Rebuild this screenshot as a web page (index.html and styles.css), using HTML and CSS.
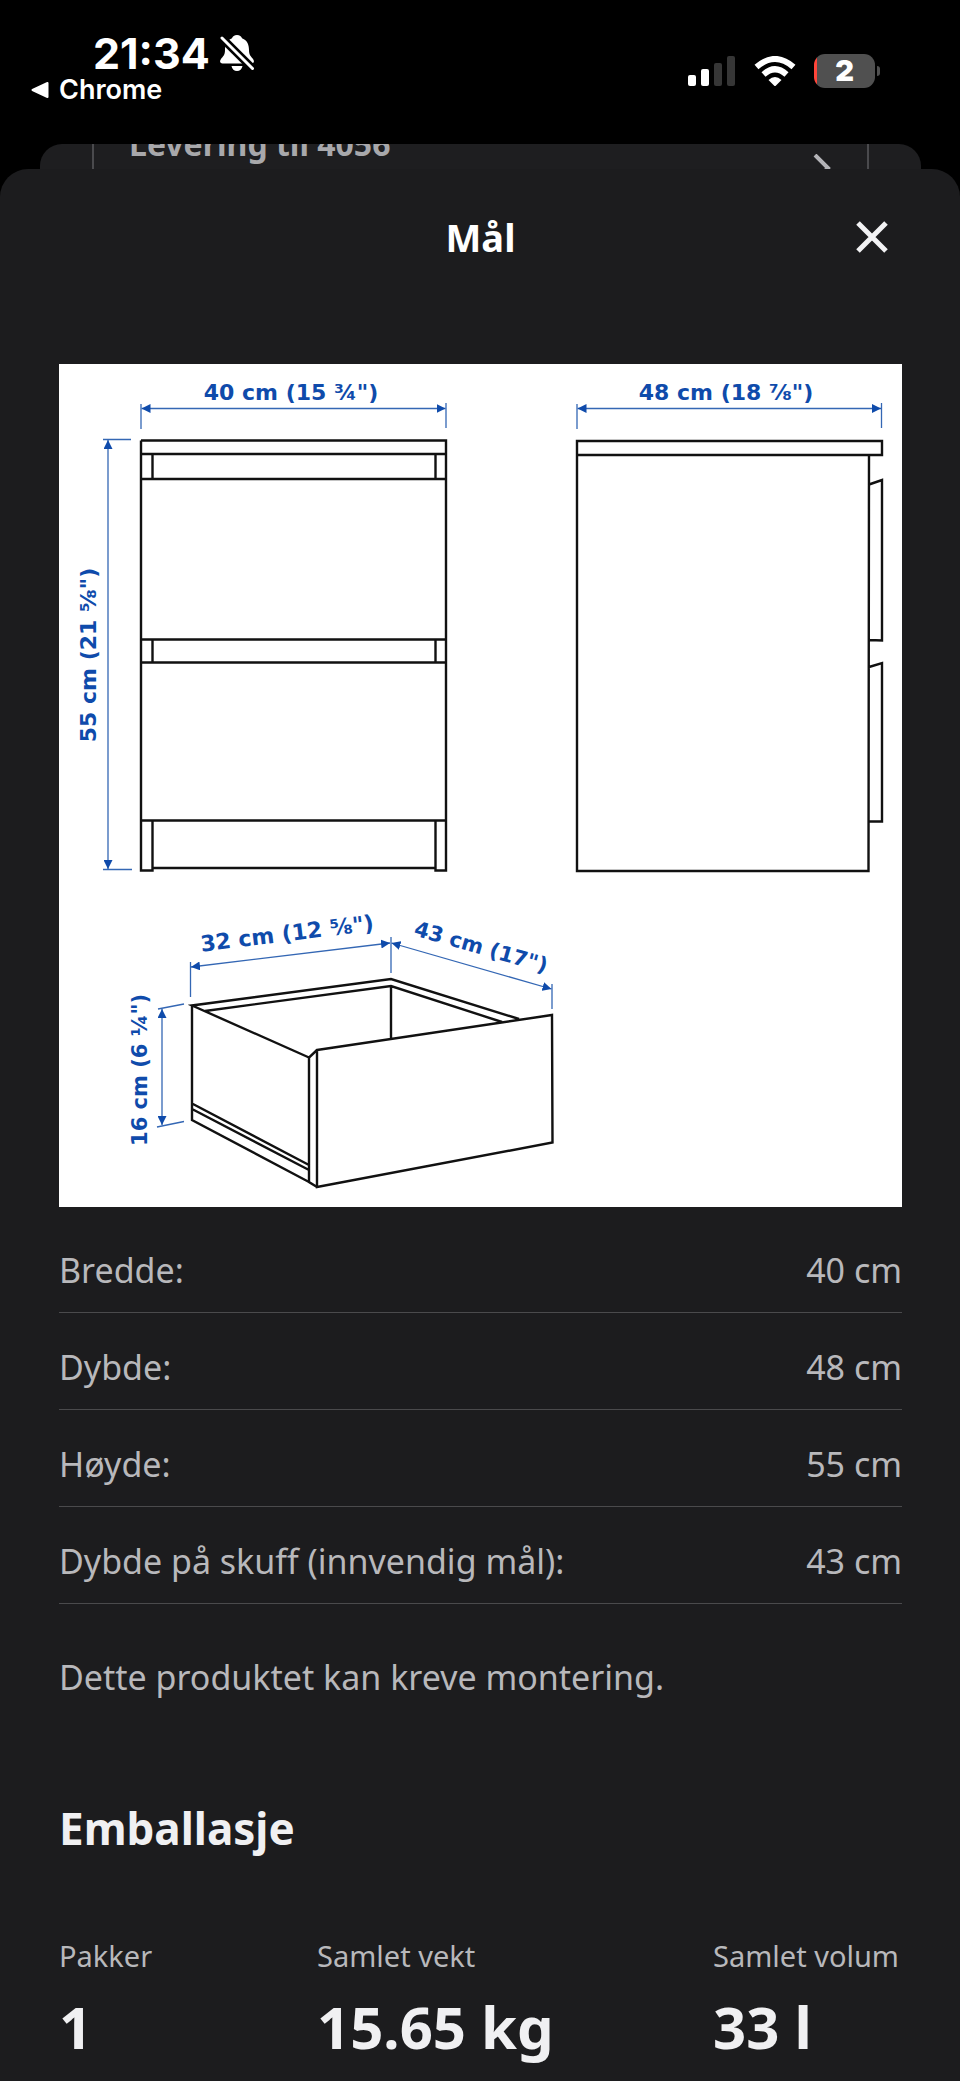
FILE: index.html
```html
<!DOCTYPE html>
<html lang="nb">
<head>
<meta charset="utf-8">
<meta name="viewport" content="width=device-width, initial-scale=1">
<title>Mål</title>
<link rel="stylesheet" href="styles.css">
</head>
<body>
<header class="status">
  <div class="status-left">
    <div class="clock">
      <time>21:34</time>
      <svg class="bell" width="34" height="36" viewBox="0 0 34 36" aria-hidden="true">
        <path fill="#fff" d="M17 0c-2.600 0-4.500 1.300-5 3.200C6.500 5.200 5 10 5 15c0 5-2 6.500-4 9-1.800 2.200-.8 4.500 1.500 4.500h29c2.300 0 3.300-2.300 1.500-4.500-2-2.500-4-4-4-9 0-5-1.500-9.800-7-11.800C21.500 1.300 19.600 0 17 0zM11.500 31h11c-.5 3-2.700 5-5.500 5s-5-2-5.500-5z"/>
        <path stroke="#000" stroke-width="8" d="M0 1l34 34"/>
        <path stroke="#fff" stroke-width="3" stroke-linecap="round" d="M2 3l30.500 30.500"/>
      </svg>
    </div>
    <a class="back" href="#">
      <svg width="18" height="18" viewBox="0 0 18 18" aria-hidden="true"><path fill="#fff" stroke="#fff" stroke-width="2" stroke-linejoin="round" d="M1.500 9L16.500 2v14z"/></svg>
      Chrome
    </a>
  </div>
  <div class="status-right">
    <svg width="48" height="30" viewBox="0 0 48 30" aria-hidden="true">
      <g fill="#fff"><rect y="19" width="8" height="11" rx="2"/><rect x="13" y="13" width="8" height="17" rx="2"/></g>
      <g fill="#363636"><rect x="26" y="7" width="8" height="23" rx="2"/><rect x="39" width="8" height="30" rx="2"/></g>
    </svg>
    <svg width="42" height="30" viewBox="0 0 42 30" aria-hidden="true">
      <g fill="none" stroke="#fff" stroke-width="6"><path d="M2.500 11Q21-5 39.500 11"/><path d="M9.500 18.500Q21 8 32.500 18.500"/></g>
      <path fill="#fff" d="M14.500 24Q21 18 27.500 24L21 30.500z"/>
    </svg>
    <div class="battery">2</div>
  </div>
</header>

<div class="backdrop">
  <div class="delivery">
    <span class="delivery-text">Levering til 4056</span>
    <svg width="18" height="28" viewBox="0 0 18 28" aria-hidden="true"><path fill="none" stroke="#b4b4b8" stroke-width="4" d="M2 1l13 13L2 27"/></svg>
  </div>
</div>

<main class="sheet">
  <div class="sheet-head">
    <h1>Mål</h1>
    <button class="close" type="button" aria-label="Lukk">
      <svg width="32" height="32" viewBox="0 0 32 32" aria-hidden="true"><path stroke="#f2f2f4" stroke-width="5" d="M2 2l28 28M30 2L2 30"/></svg>
    </button>
  </div>

  <svg class="drawing" viewBox="59 364 843 843" role="img" aria-label="Måltegning">
    <defs>
      <marker id="arrow" viewBox="0 0 8 8" refX="8" refY="4" markerWidth="9" markerHeight="9" markerUnits="userSpaceOnUse" orient="auto-start-reverse"><path class="tip" d="M0 0l8 4-8 4z"/></marker>
    </defs>
    <g class="outline">
      <!-- front -->
      <path d="M141 440.500H446V870.500H435.500V820.500M141 440.500V870.500H152.500V820.500M141 454H446M141 479H446M152.500 454V479M435.500 454V479M141 639.500H446M141 662.500H446M152.500 639.500V663M435.500 639.500V662.500M141 820.500H446M152.500 868H435.500"/>
      <!-- side -->
      <path d="M577 441H882V455H577zM577 455V871H868.500L869 455M869 484.500L882 480V640.500L869 640M869 667L882 663V821.500H869"/>
      <!-- drawer -->
      <path d="M309 1057.500L192 1005.500L391 979L519 1019M205 1011L391 986L502 1022M391 986V1038M317 1050L552 1015L552.500 1142.500L317 1187zM317 1050L309 1057.500V1182L317 1187M192 1005.500V1120L309 1182M192 1103.500L309 1165M192 1109L309 1170"/>
    </g>
    <g class="ticks">
      <path d="M141 404V429M446 403V428M103 439.500H131M103 869.500H132M577 404V429M881.500 403V428M190.500 962V997M391 937V973M552 984V1009M158 1009L184 1004M157 1127L184 1121.500"/>
      <g marker-start="url(#arrow)" marker-end="url(#arrow)">
        <path d="M141.500 408.500H445.500"/><path d="M577.500 408.500H881"/><path d="M108 440V869"/>
        <path d="M191 967L390 943"/><path d="M391.500 943L551.500 989"/><path d="M162 1009V1125"/>
      </g>
    </g>
    <g class="dims" text-anchor="middle">
      <text x="291" y="400">40 cm (15 ¾")</text>
      <text x="726" y="400">48 cm (18 ⅞")</text>
      <text transform="translate(96 655) rotate(-90)">55 cm (21 ⅝")</text>
      <text transform="translate(288 941) rotate(-7)">32 cm (12 ⅝")</text>
      <text class="dim-small" transform="translate(479 954) rotate(16)">43 cm (17")</text>
      <text class="dim-small" transform="translate(147 1070) rotate(-90)">16 cm (6 ¼")</text>
    </g>
  </svg>

  <table class="specs">
    <tbody>
      <tr><th scope="row">Bredde:</th><td>40 cm</td></tr>
      <tr><th scope="row">Dybde:</th><td>48 cm</td></tr>
      <tr><th scope="row">Høyde:</th><td>55 cm</td></tr>
      <tr><th scope="row">Dybde på skuff (innvendig mål):</th><td>43 cm</td></tr>
    </tbody>
  </table>

  <p class="note">Dette produktet kan kreve montering.</p>

  <h2>Emballasje</h2>
  <dl class="package">
    <div><dt>Pakker</dt><dd>1</dd></div>
    <div><dt>Samlet vekt</dt><dd>15.65 kg</dd></div>
    <div><dt>Samlet volum</dt><dd>33 l</dd></div>
  </dl>
</main>
</body>
</html>
```

FILE: styles.css
```css
* { box-sizing: border-box; }
body {
  margin: 0;
  background: #000;
  color: #b8b8bb;
  font-family: "Noto Sans", sans-serif;
}
h1, h2, p, dl, dd { margin: 0; }
svg { display: block; flex: none; }

.status {
  display: flex;
  justify-content: space-between;
  height: 144px;
  padding: 28px 85px 0 31px;
  color: #fff;
  font-family: Inter, sans-serif;
}
.clock {
  display: flex;
  align-items: center;
  gap: 10px;
  padding-left: 62px;
  font-size: 43px;
  font-weight: 700;
  line-height: 50px;
}
.back {
  display: flex;
  align-items: center;
  gap: 10px;
  color: #fff;
  font-size: 27px;
  font-weight: 600;
  line-height: 24px;
  text-decoration: none;
}
.status-right {
  display: flex;
  align-items: center;
  gap: 18px;
  height: 86px;
}
.battery {
  position: relative;
  width: 61px;
  height: 34px;
  border-radius: 11px;
  background: linear-gradient(to right, #ff453a 3px, #505050 3px);
  font-size: 29px;
  font-weight: 900;
  line-height: 34px;
  text-align: center;
}
.battery::after {
  content: "";
  position: absolute;
  right: -5px;
  top: 12px;
  width: 3px;
  height: 10px;
  border-radius: 0 4px 4px 0;
  background: #505050;
}

.backdrop {
  height: 54px;
  margin: 0 39px 0 40px;
  padding: 0 52px;
  overflow: hidden;
  border-radius: 22px 22px 0 0;
  background: #1e1e20;
}
.delivery {
  display: flex;
  justify-content: space-between;
  height: 54px;
  padding: 0 36px 0 35px;
  border: solid #4a4a4d;
  border-width: 0 2px;
}
.delivery-text {
  margin-top: -20px;
  color: #a8a8ab;
  font-size: 32px;
  font-weight: 700;
  line-height: 40px;
}
.delivery svg { margin-top: 10px; }

.sheet {
  position: relative;
  margin-top: -29px;
  padding: 0 58px 15px 59px;
  border-radius: 28px 28px 0 0;
  background: #1c1c1e;
}
.sheet-head {
  display: grid;
  grid-template-columns: 1fr auto 1fr;
  align-items: center;
  height: 195px;
  padding: 0 14px 59px;
}
.sheet-head h1 {
  grid-column: 2;
  color: #fff;
  font-size: 38px;
  line-height: 52px;
}
.close {
  justify-self: end;
  padding: 0;
  border: 0;
  background: none;
}

.drawing {
  width: 100%;
  height: auto;
  background: #fff;
}
.outline { fill: none; stroke: #111; stroke-width: 2.4; }
.ticks { fill: none; stroke: #3467b4; stroke-width: 1.3; }
.tip { fill: #0f4bab; stroke: none; }
.dims { fill: #0f4bab; font: 700 22px "DejaVu Sans", sans-serif; }
.dim-small { font-size: 21px; }

.specs {
  width: 100%;
  margin-top: 9px;
  border-collapse: separate;
  border-spacing: 0;
  font-size: 34px;
  line-height: 48px;
}
.specs th, .specs td {
  padding: 30px 0 18px;
  border-bottom: 1px solid #4a4a4c;
  font-weight: 400;
  text-align: left;
}
.specs td { text-align: right; }

.note {
  margin-top: 49px;
  font-size: 34px;
  line-height: 48px;
}
h2 {
  margin-top: 97px;
  color: #f0f0f2;
  font-size: 44px;
  line-height: 60px;
}
.package {
  display: grid;
  grid-template-columns: 258fr 396fr 189fr;
  margin-top: 78px;
}
.package dt {
  font-size: 29px;
  line-height: 40px;
  white-space: nowrap;
}
.package dd {
  margin-top: 11px;
  color: #f0f0f2;
  font-size: 58px;
  font-weight: 700;
  line-height: 79px;
}
```
